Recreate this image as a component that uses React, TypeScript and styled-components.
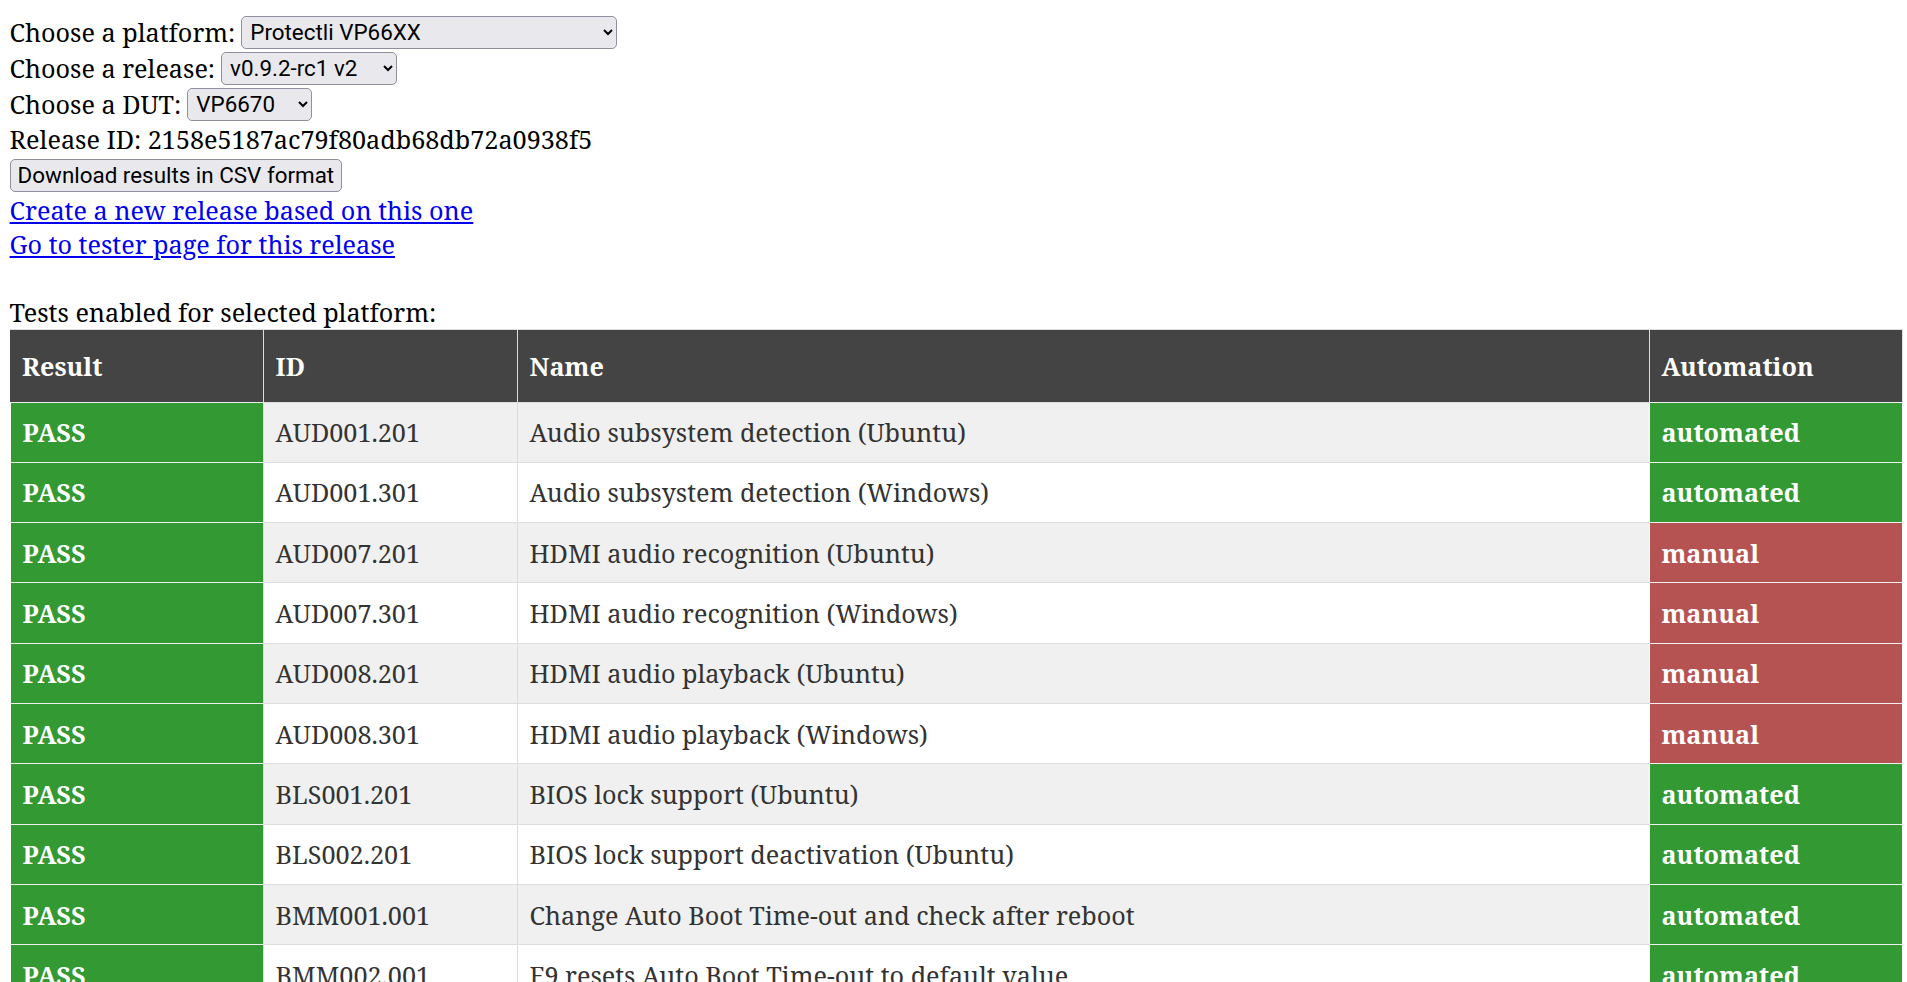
import React from "react";
import styled, { createGlobalStyle } from "styled-components";

type Row = {
  result: "PASS" | "FAIL";
  id: string;
  name: string;
  automation: "automated" | "manual";
};

const rows: Row[] = [
  { result: "PASS", id: "AUD001.201", name: "Audio subsystem detection (Ubuntu)", automation: "automated" },
  { result: "PASS", id: "AUD001.301", name: "Audio subsystem detection (Windows)", automation: "automated" },
  { result: "PASS", id: "AUD007.201", name: "HDMI audio recognition (Ubuntu)", automation: "manual" },
  { result: "PASS", id: "AUD007.301", name: "HDMI audio recognition (Windows)", automation: "manual" },
  { result: "PASS", id: "AUD008.201", name: "HDMI audio playback (Ubuntu)", automation: "manual" },
  { result: "PASS", id: "AUD008.301", name: "HDMI audio playback (Windows)", automation: "manual" },
  { result: "PASS", id: "BLS001.201", name: "BIOS lock support (Ubuntu)", automation: "automated" },
  { result: "PASS", id: "BLS002.201", name: "BIOS lock support deactivation (Ubuntu)", automation: "automated" },
  { result: "PASS", id: "BMM001.001", name: "Change Auto Boot Time-out and check after reboot", automation: "automated" },
  { result: "PASS", id: "BMM002.001", name: "F9 resets Auto Boot Time-out to default value", automation: "automated" },
];

const COLORS = {
  header: "#444444",
  green: "#339933",
  red: "#b55353",
  stripe: "#f0f0f0",
  line: "#dddddd",
  text: "#333333",
};

const GlobalStyle = createGlobalStyle`
  body {
    margin: 0;
    font-family: "Noto Serif", serif;
    font-size: 25.2px;
    color: #000;
    background: #fff;
  }
`;

const Page = styled.div`
  padding: 14px 4.5px 0 9.6px;
`;

const Line = styled.div`
  display: flex;
  align-items: center;
  height: 36px;
  white-space: pre;
`;

const TextLine = styled.div`
  line-height: 34px;
`;

const Select = styled.select<{ $width: number }>`
  width: ${(p) => p.$width}px;
  height: 33px;
  margin-left: 6px;
  font-family: Roboto, "Liberation Sans", sans-serif;
  font-size: 22.4px;
  padding: 0 4px;
  border: 1px solid #8f8f9d;
  border-radius: 5px;
  background: #e9e9ed;
  color: #000;
`;

const Button = styled.button`
  height: 33px;
  margin: 1px 0;
  padding: 0 7px;
  font-family: Roboto, "Liberation Sans", sans-serif;
  font-size: 22.4px;
  border: 1px solid #8f8f9d;
  border-radius: 5px;
  background: #e9e9ed;
  color: #000;
`;

const Link = styled.a`
  color: #0000ee;
  text-decoration: underline;
`;

const Caption = styled.div`
  margin-top: 34px;
  line-height: 34px;
`;

const Table = styled.table`
  width: 100%;
  border-collapse: collapse;
  table-layout: fixed;
  border-top: 1px solid ${COLORS.line};
`;

const Th = styled.th`
  background: ${COLORS.header};
  color: #fff;
  font-weight: bold;
  text-align: left;
  height: 72px;
  padding: 0 12px;
  border-left: 1px solid ${COLORS.line};
  border-right: 1px solid ${COLORS.line};
  &:first-child {
    border-left: none;
  }
`;

const Tr = styled.tr<{ $stripe: boolean }>`
  background: ${(p) => (p.$stripe ? COLORS.stripe : "#fff")};
`;

const Td = styled.td<{ $tone?: "green" | "red" }>`
  height: 59.3px;
  padding: 0 12px;
  color: ${(p) => (p.$tone ? "#fff" : COLORS.text)};
  font-weight: ${(p) => (p.$tone ? "bold" : "normal")};
  background: ${(p) => (p.$tone === "green" ? COLORS.green : p.$tone === "red" ? COLORS.red : "transparent")};
  border-top: 1px solid ${(p) => (p.$tone ? "rgba(0,0,0,0.06)" : COLORS.line)};
  border-left: 1px solid ${(p) => (p.$tone ? "transparent" : COLORS.line)};
  white-space: nowrap;
  overflow: hidden;
`;

export default function App() {
  return (
    <>
      <GlobalStyle />
      <Page>
        <Line>
          Choose a platform:
          <Select $width={376} defaultValue="vp66xx">
            <option value="vp66xx">Protectli VP66XX</option>
          </Select>
        </Line>
        <Line>
          Choose a release:
          <Select $width={176} defaultValue="v2">
            <option value="v2">v0.9.2-rc1 v2</option>
          </Select>
        </Line>
        <Line>
          Choose a DUT:
          <Select $width={125} defaultValue="vp6670">
            <option value="vp6670">VP6670</option>
          </Select>
        </Line>
        <TextLine>Release ID: 2158e5187ac79f80adb68db72a0938f5</TextLine>
        <div>
          <Button>Download results in CSV format</Button>
        </div>
        <TextLine>
          <Link href="#">Create a new release based on this one</Link>
        </TextLine>
        <TextLine>
          <Link href="#">Go to tester page for this release</Link>
        </TextLine>
        <Caption>Tests enabled for selected platform:</Caption>
        <Table>
          <colgroup>
            <col style={{ width: 253 }} />
            <col style={{ width: 254 }} />
            <col />
            <col style={{ width: 253 }} />
          </colgroup>
          <thead>
            <tr>
              <Th>Result</Th>
              <Th>ID</Th>
              <Th>Name</Th>
              <Th>Automation</Th>
            </tr>
          </thead>
          <tbody>
            {rows.map((r, i) => (
              <Tr key={r.id} $stripe={i % 2 === 0}>
                <Td $tone={r.result === "PASS" ? "green" : "red"}>{r.result}</Td>
                <Td>{r.id}</Td>
                <Td>{r.name}</Td>
                <Td $tone={r.automation === "automated" ? "green" : "red"}>{r.automation}</Td>
              </Tr>
            ))}
          </tbody>
        </Table>
      </Page>
    </>
  );
}
